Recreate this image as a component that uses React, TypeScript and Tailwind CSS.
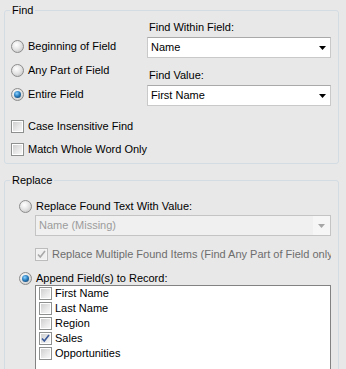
import type { ReactNode } from "react";

// WinForms-style Find / Replace panel

function Radio({ checked }: { checked?: boolean }) {
  return (
    <span className="relative flex h-[13px] w-[13px] shrink-0 items-center justify-center rounded-full border border-[#8c8c8c] bg-[radial-gradient(circle_at_40%_35%,#ffffff_0%,#e6e6e6_45%,#bdbdbd_100%)]">
      {checked && (
        <span className="h-[7px] w-[7px] rounded-full bg-[radial-gradient(circle_at_40%_35%,#8fd3ff_0%,#2b7fc0_45%,#0a2f52_100%)]" />
      )}
    </span>
  );
}

function Check({ checked, disabled }: { checked?: boolean; disabled?: boolean }) {
  return (
    <span
      className={
        disabled
          ? "flex h-[13px] w-[13px] shrink-0 items-center justify-center border border-[#bcbcbc] bg-[#f4f4f4]"
          : "flex h-[13px] w-[13px] shrink-0 items-center justify-center border border-[#8e8f8f] bg-white"
      }
    >
      {disabled ? (
        <span className="flex h-[9px] w-[9px] items-center justify-center bg-[#f0f0f0]">
          {checked && <CheckMark color="#a8a8a8" />}
        </span>
      ) : (
        <span className="flex h-[9px] w-[9px] items-center justify-center bg-[linear-gradient(135deg,#cfcfcf_0%,#e9e9e9_60%,#f7f7f7_100%)]">
          {checked && <CheckMark color="#3c5a99" />}
        </span>
      )}
    </span>
  );
}

function CheckMark({ color }: { color: string }) {
  return (
    <svg width="9" height="9" viewBox="0 0 9 9">
      <path d="M1 4.5 L3.3 7 L8 1" fill="none" stroke={color} strokeWidth="1.6" />
    </svg>
  );
}

function Arrow({ color }: { color: string }) {
  return (
    <svg width="7" height="4" viewBox="0 0 7 4">
      <path d="M0 0 H7 L3.5 4 Z" fill={color} />
    </svg>
  );
}

function Combo({ value }: { value: string }) {
  return (
    <div className="flex h-[21px] w-[184px] items-center border border-[#c9c9c9] border-t-[#a9a9a9] bg-white pl-[3px] pr-[4px]">
      <span className="flex-1 text-black">{value}</span>
      <Arrow color="#000" />
    </div>
  );
}

function Group({ title, h, children }: { title: string; h: string; children: ReactNode }) {
  return (
    <fieldset className={`ml-[4px] w-[335px] rounded-[3px] border border-[#d3dce3] ${h}`}>
      <legend className="ml-[5px] px-[2px] leading-[13px] text-black">{title}</legend>
      {children}
    </fieldset>
  );
}

export default function App() {
  const fields = [
    { name: "First Name", on: false },
    { name: "Last Name", on: false },
    { name: "Region", on: false },
    { name: "Sales", on: true },
    { name: "Opportunities", on: false },
  ];

  return (
    <div className="h-[369px] w-[346px] overflow-hidden bg-[#e8e8e8] pt-[4px] font-['Liberation_Sans',Arial,sans-serif] text-[11px] leading-[13px] text-black">
      <Group title="Find" h="h-[160px]">
        <div className="flex">
          <div className="mt-[23px] flex w-[142px] flex-col gap-[11px] pl-[6px]">
            <label className="flex h-[13px] items-center gap-[4px]">
              <Radio />
              <span>Beginning of Field</span>
            </label>
            <label className="flex h-[13px] items-center gap-[4px]">
              <Radio />
              <span>Any Part of Field</span>
            </label>
            <label className="flex h-[13px] items-center gap-[4px]">
              <Radio checked />
              <span>Entire Field</span>
            </label>
          </div>
          <div className="flex flex-col">
            <div className="mt-[4px] pl-[2px]">Find Within Field:</div>
            <div className="mt-[3px]">
              <Combo value="Name" />
            </div>
            <div className="mt-[11px] pl-[2px]">Find Value:</div>
            <div className="mt-[3px]">
              <Combo value="First Name" />
            </div>
          </div>
        </div>
        <div className="mt-[14px] flex flex-col gap-[10px] pl-[6px]">
          <label className="flex h-[13px] items-center gap-[4px]">
            <Check />
            <span>Case Insensitive Find</span>
          </label>
          <label className="flex h-[13px] items-center gap-[4px]">
            <Check />
            <span>Match Whole Word Only</span>
          </label>
        </div>
      </Group>

      <div className="h-[10px]" />

      <Group title="Replace" h="h-[220px]">
        <label className="mt-[13px] flex h-[13px] items-center gap-[4px] pl-[14px]">
          <Radio />
          <span>Replace Found Text With Value:</span>
        </label>
        <div className="ml-[30px] mt-[2px] flex h-[21px] w-[296px] items-stretch border border-[#c4c4c4] bg-[#f0f0f0]">
          <span className="flex flex-1 items-center pl-[3px] text-[#9c9c9c]">Name (Missing)</span>
          <span className="flex w-[17px] items-center justify-center bg-[#f6f6f6]">
            <Arrow color="#a6a6a6" />
          </span>
        </div>
        <label className="ml-[30px] mt-[12px] flex h-[13px] w-[296px] items-center gap-[4px] overflow-hidden whitespace-nowrap">
          <Check checked disabled />
          <span className="text-[#6d6d6d]">Replace Multiple Found Items (Find Any Part of Field only)</span>
        </label>
        <label className="mt-[11px] flex h-[13px] items-center gap-[4px] pl-[14px]">
          <Radio checked />
          <span>Append Field(s) to Record:</span>
        </label>
        <div className="ml-[30px] h-[120px] w-[296px] border border-[#828282] bg-white pl-[3px]">
          {fields.map((f) => (
            <div key={f.name} className="flex h-[15px] items-center gap-[3px]">
              <Check checked={f.on} />
              <span>{f.name}</span>
            </div>
          ))}
        </div>
      </Group>
    </div>
  );
}
